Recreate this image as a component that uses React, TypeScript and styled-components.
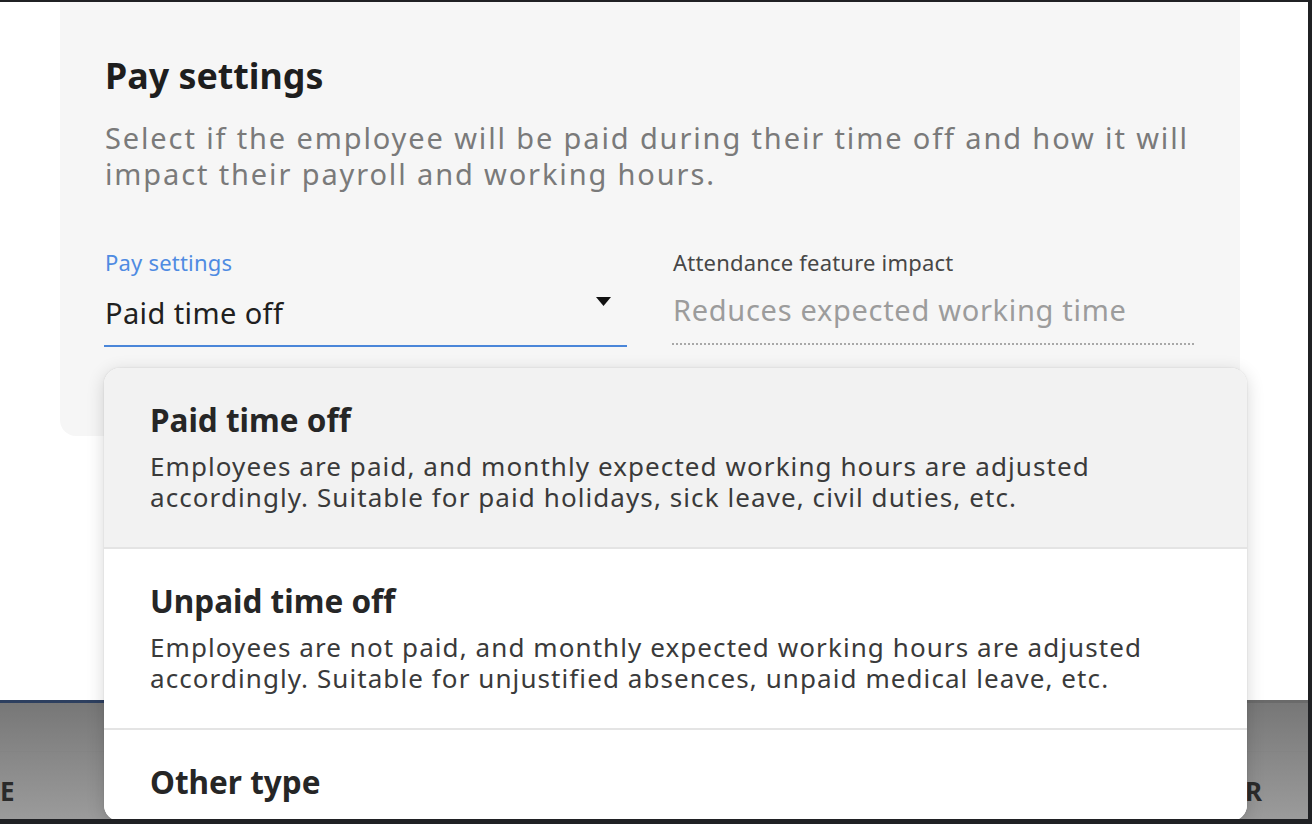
import React from "react";
import styled, { createGlobalStyle } from "styled-components";

const Global = createGlobalStyle`
  html, body { margin: 0; padding: 0; }
  body {
    width: 1312px;
    height: 824px;
    overflow: hidden;
    background: #ffffff;
    font-family: "Noto Sans", "Open Sans", sans-serif;
  }
  * { box-sizing: border-box; }
`;

const Frame = styled.div`
  position: relative;
  width: 1312px;
  height: 824px;
  border-top: 2px solid #202124;
  border-right: 4px solid #202124;
  border-bottom: 5px solid #202124;
  display: flex;
  flex-direction: column;
  overflow: hidden;
`;

const Modal = styled.div`
  background: #ffffff;
  height: 698px;
  flex: none;
`;

const Panel = styled.section`
  margin-left: 60px;
  width: 1180px;
  height: 434px;
  background: #f6f6f6;
  border-bottom-left-radius: 16px;
  border-bottom-right-radius: 16px;
  padding: 53px 45px 0 45px;
`;

const Heading = styled.h2`
  margin: 0;
  font-size: 35.8px;
  line-height: 40px;
  font-weight: 700;
  color: #1e1e1e;
`;

const Intro = styled.p`
  margin: 25px 0 0;
  font-size: 29px;
  line-height: 36px;
  letter-spacing: 1.87px;
  color: #7a7a7a;
  max-width: 1100px;
`;

const Fields = styled.div`
  margin-top: 58px;
  display: grid;
  grid-template-columns: 523px 522px;
  column-gap: 45px;
  margin-left: -1px;
`;

const Field = styled.div`
  display: flex;
  flex-direction: column;
`;

const Label = styled.span<{ $active?: boolean }>`
  font-size: 22px;
  line-height: 24px;
  letter-spacing: 0.2px;
  color: ${(p) => (p.$active ? "#4f8be2" : "#474747")};
  padding-left: 1px;
`;

const SelectBox = styled.div`
  margin-top: 21px;
  height: 52px;
  padding: 0 0 0 1px;
  border-bottom: 2px solid #4a86d9;
  display: flex;
  align-items: flex-start;
  justify-content: space-between;
`;

const Value = styled.span<{ $muted?: boolean }>`
  font-size: 29px;
  line-height: 36px;
  letter-spacing: ${(p) => (p.$muted ? "0.7px" : "0.4px")};
  color: ${(p) => (p.$muted ? "#9c9c9c" : "#202020")};
`;

const Caret = styled.svg`
  margin: 2px 16px 0 0;
  flex: none;
`;

const ReadOnlyBox = styled.div`
  margin-top: 18px;
  height: 53px;
  padding-left: 1px;
  border-bottom: 2px dotted #a8a8a8;
`;

const Backdrop = styled.div`
  flex: 1;
  background: linear-gradient(#777777, #9b9b9b);
  border-top: 3px solid;
  border-image: linear-gradient(to right, #2d3f5f 0, #2d3f5f 420px, #6a6a6a 420px) 1;
  display: flex;
  flex-direction: column;
`;

const BackdropRow = styled.div`
  height: 49px;
  border-bottom: 1px solid #848484;
`;

const HeaderRow = styled.div`
  flex: 1;
  display: flex;
  justify-content: space-between;
  align-items: center;
  padding: 10px 46px 0 0;
  font-size: 26px;
  font-weight: 700;
  color: #2a2a2a;
`;

const Menu = styled.div`
  position: absolute;
  left: 104px;
  top: 366px;
  width: 1143px;
  height: 453px;
  background: #ffffff;
  border-radius: 16px;
  box-shadow: 0 4px 18px rgba(0, 0, 0, 0.16), 0 0 2px rgba(0, 0, 0, 0.12);
  overflow: hidden;
`;

const Option = styled.div<{ $selected?: boolean }>`
  padding: 35px 46px 34px 46px;
  background: ${(p) => (p.$selected ? "#f2f2f2" : "#ffffff")};
  border-bottom: 2px solid #e4e4e4;
`;

const OptionTitle = styled.div`
  font-size: 31.5px;
  line-height: 34px;
  font-weight: 700;
  color: #262626;
`;

const OptionText = styled.div`
  margin-top: 14px;
  font-size: 26px;
  line-height: 31px;
  letter-spacing: 1.08px;
  color: #3a3a3a;
`;

const options = [
  {
    title: "Paid time off",
    text: "Employees are paid, and monthly expected working hours are adjusted accordingly. Suitable for paid holidays, sick leave, civil duties, etc.",
  },
  {
    title: "Unpaid time off",
    text: "Employees are not paid, and monthly expected working hours are adjusted accordingly. Suitable for unjustified absences, unpaid medical leave, etc.",
  },
  {
    title: "Other type",
    text: "Use this type to specific working conditions such as working from home, business trips, training days, etc.",
  },
];

export default function App() {
  return (
    <>
      <Global />
      <Frame>
        <Modal>
          <Panel>
            <Heading>Pay settings</Heading>
            <Intro>
              Select if the employee will be paid during their time off and how it will impact their payroll and working hours.
            </Intro>
            <Fields>
              <Field>
                <Label $active>Pay settings</Label>
                <SelectBox>
                  <Value>Paid time off</Value>
                  <Caret width="15" height="9" viewBox="0 0 15 9">
                    <path d="M0 0 H15 L7.5 9 Z" fill="#111" />
                  </Caret>
                </SelectBox>
              </Field>
              <Field>
                <Label>Attendance feature impact</Label>
                <ReadOnlyBox>
                  <Value $muted>Reduces expected working time</Value>
                </ReadOnlyBox>
              </Field>
            </Fields>
          </Panel>
        </Modal>
        <Backdrop>
          <BackdropRow />
          <HeaderRow>
            <span>E</span>
            <span>R</span>
          </HeaderRow>
        </Backdrop>
        <Menu>
          {options.map((o, i) => (
            <Option key={o.title} $selected={i === 0}>
              <OptionTitle>{o.title}</OptionTitle>
              <OptionText>{o.text}</OptionText>
            </Option>
          ))}
        </Menu>
      </Frame>
    </>
  );
}
